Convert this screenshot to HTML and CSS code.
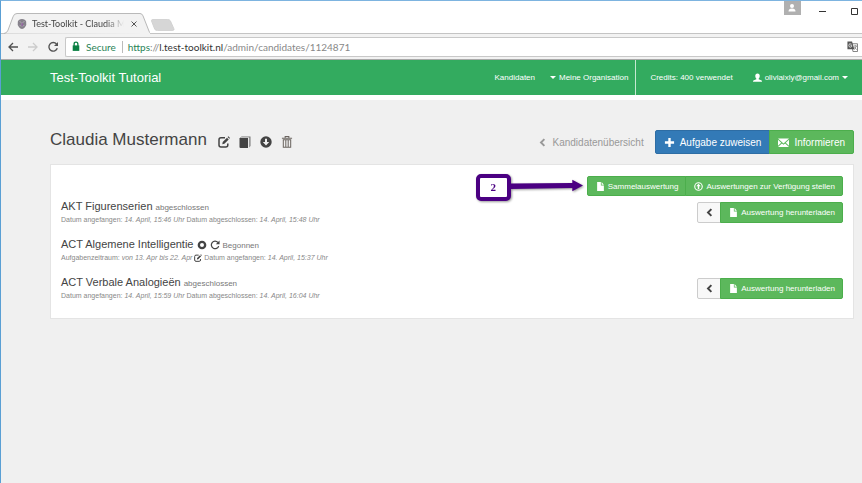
FILE: index.html
```html
<!DOCTYPE html>
<html lang="de">
<head>
    <meta charset="UTF-8">
    <meta name="viewport" content="width=device-width, initial-scale=1.0">
    <title>Test-Toolkit - Claudia Mustermann</title>
    <link rel="stylesheet" href="styles.css">
</head>
<body>
    <svg class="sprite" aria-hidden="true">
        <symbol id="i-left" viewBox="0 0 12 12"><path d="M8.500 1.500 4 6l4.500 4.500" fill="none" stroke="currentColor" stroke-width="2.600"/></symbol>
        <symbol id="i-file" viewBox="0 0 12 12"><path d="M1.500 0H6.500V4.500H10.500V12H1.500ZM7.500 0 10.500 3.500H7.500Z" fill="currentColor"/></symbol>
        <symbol id="i-edit" viewBox="0 0 12 12"><path d="M7 1.700H3Q1 1.700 1 3.700V9Q1 11 3 11H7.800Q9.800 11 9.800 9V7.500" fill="none" stroke="currentColor" stroke-width="1.500"/><path d="M4.300 8.200 4.700 6 9 1.700 10.700 3.400 6.400 7.700ZM9.600 1.100 10.400.3 12 1.900 11.300 2.700Z" fill="currentColor"/></symbol>
        <symbol id="i-up" viewBox="0 0 12 12"><circle cx="6" cy="6" r="5" fill="none" stroke="currentColor" stroke-width="1.500"/><path d="M6 2.300 9 5.600H7V9.300H5V5.600H3Z" fill="currentColor"/></symbol>
    </svg>

    <div class="browser">
        <div class="tabs">
            <div class="tab">
                <svg class="tab-shape" viewBox="0 0 146 22" preserveAspectRatio="none"><path d="M0 21.500Q3 21 4 18L9 4Q10 .5 13 .5H136Q138 .5 139 3L145 19Q146 21 147 22" fill="#f2f2f2" stroke="#b5b5b5"/></svg>
                <svg class="favicon" viewBox="0 0 12 12"><path d="M6 0Q10 0 11 3 12 7 9.500 10 8 12 6 12 4 12 2.500 10 0 7 1 3 2 0 6 0Z" fill="#85818a"/><path d="M3 3 5 4M9 3 7 4M6 4V8M3 7 5 9M9 7 7 9" stroke="#b9aebf"/><path d="M5.500 5H7V8H5.500Z" fill="#9457a5"/></svg>
                <span class="tab-title">Test-Toolkit - Claudia Mustermann</span>
                <button class="tab-close" aria-label="Tab schließen"><svg viewBox="0 0 8 8"><path d="M1.500 1.500 6.500 6.500M6.500 1.500 1.500 6.500" stroke="#555"/></svg></button>
            </div>
            <button class="new-tab" aria-label="Neuer Tab"><svg viewBox="0 0 26 13"><path d="M2 .5H18Q20 .5 21 2L25 11Q25 12.500 23 12.500H7Q5 12.500 4 11L.5 2Q.5.5 2 .5Z" fill="#d6d6d6" stroke="#d0d0d0"/></svg></button>
            <div class="window-controls">
                <button class="profile" aria-label="Profil"><svg viewBox="0 0 12 12"><circle cx="6" cy="4" r="2" fill="#fff"/><path d="M2.500 9.500Q2.500 6.500 6 6.500 9.500 6.500 9.500 9.500Z" fill="#fff"/></svg></button>
                <button aria-label="Minimieren"><svg viewBox="0 0 8 8"><path d="M0 4.500H7" stroke="#333"/></svg></button>
                <button aria-label="Maximieren"><svg viewBox="0 0 8 8"><path d="M.5 1.500H6.500V7.500H.5Z" fill="none" stroke="#333"/></svg></button>
            </div>
        </div>
        <div class="toolbar">
            <button aria-label="Zurück"><svg viewBox="0 0 12 12"><path d="M11 6H2M6 2 2 6l4 4" fill="none" stroke="#505050" stroke-width="1.300"/></svg></button>
            <button aria-label="Vorwärts"><svg viewBox="0 0 12 12"><path d="M1 6H10M6 2 10 6 6 10" fill="none" stroke="#ccc" stroke-width="1.300"/></svg></button>
            <button aria-label="Neu laden"><svg viewBox="0 0 12 12"><path d="M9.500 3A4.300 4.300 0 1 0 10.300 7.200" fill="none" stroke="#555" stroke-width="1.400"/><path d="M11 1V5H7Z" fill="#555"/></svg></button>
            <div class="address">
                <svg class="lock" viewBox="0 0 8 10"><path d="M1 4H7V9H1Z" fill="#0b8043"/><path d="M2.300 4.500V2.700Q2.300 1 4 1T5.700 2.700V4.500" fill="none" stroke="#0b8043" stroke-width="1.200"/></svg>
                <span class="secure">Secure</span>
                <span class="url"><span class="scheme">https</span><span class="dim">://</span>l.test-toolkit.nl<span class="dim">/admin/candidates/1124871</span></span>
                <svg class="translate" viewBox="0 0 12 12"><path d="M5 3H11.500V11.500H6.500Z" fill="#fff" stroke="#777"/><path d="M.5.5H5.500L8 9H.5Z" fill="#555"/><path d="M5 3.500Q2 2 2 4.700 2 7 4 6.700 5.500 6.500 5.200 5H3.800" fill="none" stroke="#fff" stroke-width=".8"/><path d="M7.500 5.500H11M9 4.500V5.500M10.300 5.500 7.800 9.500M8 6.500 10.500 9.500" stroke="#777" stroke-width=".8"/></svg>
            </div>
        </div>
    </div>

    <nav class="navbar">
        <a class="brand" href="#">Test-Toolkit Tutorial</a>
        <div class="nav-main">
            <a href="#">Kandidaten</a>
            <a href="#"><span class="caret"></span>Meine Organisation</a>
        </div>
        <div class="nav-user">
            <a href="#">Credits: 400 verwendet</a>
            <a href="#"><svg class="icon-small" viewBox="0 0 12 12"><path d="M6 .5Q9 .5 9 4 9 6 7.500 7.500V8.300L11.500 10Q12 10.500 12 11.500H0Q0 10.500.5 10L4.500 8.300V7.500Q3 6 3 4 3 .5 6 .5Z" fill="currentColor"/></svg>oliviaixly@gmail.com<span class="caret"></span></a>
        </div>
    </nav>

    <main>
        <header class="page-header">
            <h1>Claudia Mustermann</h1>
            <div class="tools">
                <button aria-label="Bearbeiten"><svg><use href="#i-edit"/></svg></button>
                <button aria-label="Bericht"><svg viewBox="0 0 12 12"><path d="M2.500.5H11.500V10L10 11.500V2H1Z" fill="#777"/><path d="M.5 2H9V12H1.500Q.5 12 .5 11Z" fill="currentColor"/><path d="M2 1.500H10V11" fill="none" stroke="#ddd" stroke-width=".7"/></svg></button>
                <button aria-label="Herunterladen"><svg viewBox="0 0 12 12"><circle cx="6" cy="6" r="5.700" fill="currentColor"/><path d="M5 2.700H7V6H9.200L6 9.500 2.800 6H5Z" fill="#f0f0f0"/></svg></button>
                <button aria-label="Löschen"><svg viewBox="0 0 12 13"><path d="M.5 2.500H11.500M4 2V.6H8V2M2 4H10V12.300H2ZM4.700 4V12M7.300 4V12" fill="none" stroke="#6b6560" stroke-width="1.100"/></svg></button>
            </div>
            <a class="back" href="#"><svg><use href="#i-left"/></svg>Kandidatenübersicht</a>
            <div class="group large">
                <button class="btn blue"><svg viewBox="0 0 12 12"><path d="M6 1V11M1 6H11" stroke="currentColor" stroke-width="2.600"/></svg>Aufgabe zuweisen</button>
                <button class="btn green"><svg viewBox="0 0 12 12"><path d="M0 1.500H12L6 7ZM0 3 3.500 6.300 0 9.500ZM12 3V9.500L8.500 6.300ZM4.300 7 6 8.500 7.700 7 12 11H0Z" fill="currentColor"/></svg>Informieren</button>
            </div>
        </header>

        <section class="card">
            <div class="card-actions">
                <div class="group">
                    <button class="btn green"><svg><use href="#i-file"/></svg>Sammelauswertung</button>
                    <button class="btn green"><svg><use href="#i-up"/></svg>Auswertungen zur Verfügung stellen</button>
                    <div class="callout">
                        <span class="callout-number">2</span>
                        <svg class="callout-arrow" viewBox="0 0 74 14"><path d="M0 4.500 63 4V.5L74 6.500 63 12.500V9L0 10Z" fill="#4b0082"/></svg>
                    </div>
                </div>
            </div>

            <article class="task">
                <div class="task-info">
                    <h2>AKT Figurenserien <small>abgeschlossen</small></h2>
                    <p>Datum angefangen: <em>14. April, 15:46 Uhr</em> Datum abgeschlossen: <em>14. April, 15:48 Uhr</em></p>
                </div>
                <div class="group">
                    <button class="btn plain" aria-label="Mehr"><svg><use href="#i-left"/></svg></button>
                    <button class="btn green"><svg><use href="#i-file"/></svg>Auswertung herunterladen</button>
                </div>
            </article>

            <article class="task">
                <div class="task-info">
                    <h2>ACT Algemene Intelligentie
                        <svg viewBox="0 0 12 12"><circle cx="6" cy="6" r="3.800" fill="none" stroke="currentColor" stroke-width="2.800"/></svg>
                        <svg viewBox="0 0 12 12"><path d="M9.500 3A4.500 4.500 0 1 0 10.400 7.300" fill="none" stroke="currentColor" stroke-width="1.500"/><path d="M11.500.5V5H7Z" fill="currentColor"/></svg>
                        <small>Begonnen</small></h2>
                    <p>Aufgabenzeitraum: <em>von 13. Apr bis 22. Apr</em> <svg><use href="#i-edit"/></svg> Datum angefangen: <em>14. April, 15:37 Uhr</em></p>
                </div>
            </article>

            <article class="task">
                <div class="task-info">
                    <h2>ACT Verbale Analogieën <small>abgeschlossen</small></h2>
                    <p>Datum angefangen: <em>14. April, 15:59 Uhr</em> Datum abgeschlossen: <em>14. April, 16:04 Uhr</em></p>
                </div>
                <div class="group">
                    <button class="btn plain" aria-label="Mehr"><svg><use href="#i-left"/></svg></button>
                    <button class="btn green"><svg><use href="#i-file"/></svg>Auswertung herunterladen</button>
                </div>
            </article>
        </section>
    </main>
</body>
</html>
```
FILE: styles.css
```css
* {
    box-sizing: border-box;
}
body {
    margin: 0;
    min-height: 100vh;
    border-top: 1px solid #7db4e0;
    border-left: 1px solid #5a9fd4;
    background-color: #f0f0f0;
    font-family: "Liberation Sans", Arial, sans-serif;
    font-size: 8px;
    color: #444;
}
h1, h2, p {
    margin: 0;
    font-weight: normal;
}
a {
    color: inherit;
    text-decoration: none;
}
button {
    padding: 0;
    border: none;
    background: none;
    font-family: inherit;
    color: inherit;
    cursor: pointer;
}
svg {
    display: block;
    flex: none;
}
.sprite {
    position: absolute;
    width: 0;
    height: 0;
}

/* Browser */
.browser {
    font-family: Lato, "Open Sans", sans-serif;
    background-color: #f2f2f2;
}
.tabs {
    display: flex;
    align-items: flex-end;
    height: 33px;
    padding-left: 3px;
    background-color: #fff;
    border-bottom: 1px solid #c4c4c4;
}
.tab {
    position: relative;
    display: flex;
    align-items: center;
    width: 146px;
    height: 21px;
    margin-bottom: -1px;
    padding: 0 12px 0 13px;
}
.tab-shape {
    position: absolute;
    top: 0;
    left: 0;
    width: 100%;
    height: 100%;
}
.favicon {
    position: relative;
    width: 10px;
    height: 12px;
    margin-right: 5px;
}
.tab-title {
    position: relative;
    flex: 1;
    overflow: hidden;
    white-space: nowrap;
    font-size: 9px;
    -webkit-mask-image: linear-gradient(to right, #000 80%, transparent);
    mask-image: linear-gradient(to right, #000 80%, transparent);
}
.tab-close {
    position: relative;
    margin: 0 0 0 6px;
}
.tab-close svg {
    width: 8px;
    height: 8px;
}
.new-tab {
    margin-bottom: 2px;
}
.new-tab svg {
    width: 26px;
    height: 12px;
}
.window-controls {
    display: flex;
    align-self: flex-start;
    align-items: center;
    gap: 18px;
    margin-left: auto;
    margin-right: 3px;
}
.window-controls svg {
    width: 8px;
    height: 8px;
    margin-top: 5px;
}
.window-controls button + button + button {
    margin-left: 6px;
}
.window-controls .profile {
    width: 17px;
    height: 14px;
    padding-left: 2px;
    background-color: #b0b0b0;
}
.window-controls .profile svg {
    width: 12px;
    height: 12px;
    margin: 0;
}
.toolbar {
    display: flex;
    align-items: center;
    gap: 8px;
    height: 26px;
    padding-left: 6px;
    border-bottom: 1px solid #aaa;
}
.toolbar button svg {
    width: 12px;
    height: 12px;
}
.address {
    display: flex;
    align-items: center;
    flex: 1;
    height: 20px;
    margin-left: -2px;
    padding: 0 4px 0 5px;
    border: 1px solid #c8c8c8;
    border-right: none;
    border-radius: 2px 0 0 2px;
    background-color: #fff;
    font-size: 10px;
}
.lock {
    width: 10px;
    height: 11px;
    margin-right: 5px;
}
.secure {
    padding-right: 6px;
    border-right: 1px solid #bbb;
    line-height: 12px;
    color: #2a8457;
}
.url {
    flex: 1;
    padding-left: 5px;
    color: #333;
}
.scheme {
    color: #2a8457;
}
.dim {
    color: #888;
}
.translate {
    width: 11px;
    height: 11px;
}

/* Navbar */
.navbar {
    display: flex;
    align-items: center;
    height: 40px;
    padding-left: 49px;
    border-bottom: 5px solid #fff;
    background-color: #33ab5f;
    color: #fff;
}
.brand {
    margin-right: auto;
    font-size: 13px;
}
.nav-main, .nav-user {
    display: flex;
    align-items: center;
    height: 35px;
}
.nav-main {
    gap: 15px;
    padding-right: 7px;
    border-right: 1px solid #c5e8d1;
}
.nav-user {
    gap: 20px;
    padding: 0 14px;
}
.navbar a {
    display: flex;
    align-items: center;
    gap: 3px;
}
.icon-small {
    width: 9px;
    height: 9px;
}
.caret {
    border: 3px solid transparent;
    border-top-color: #fff;
    border-bottom: 0;
}

/* Page */
main {
    padding: 30px 8px 0 49px;
}
.page-header {
    display: flex;
    align-items: center;
    height: 24px;
    margin-bottom: 10px;
}
h1 {
    margin-bottom: 4px;
    font-size: 17px;
    line-height: 20px;
}
.tools {
    display: flex;
    gap: 9px;
    margin-left: 11px;
}
.tools svg {
    width: 12px;
    height: 12px;
}
.back {
    display: flex;
    align-items: center;
    gap: 6px;
    margin: 0 11px 0 auto;
    font-size: 10px;
    color: #999;
}
.back svg {
    width: 9px;
    height: 9px;
}
.group {
    position: relative;
    display: flex;
}
.btn {
    display: flex;
    align-items: center;
    justify-content: center;
    gap: 3px;
    height: 20px;
    padding: 0 7px 0 8px;
    border: 1px solid #4cae4c;
    font-size: 8px;
    white-space: nowrap;
}
.btn:first-child {
    border-radius: 2px 0 0 2px;
}
.btn + .btn {
    margin-left: -1px;
    border-radius: 0 2px 2px 0;
}
.btn svg {
    width: 9px;
    height: 9px;
}
.btn.green {
    background-color: #5cb85c;
    color: #fff;
}
.btn.blue {
    background-color: #337ab7;
    border-color: #2e6da4;
    color: #fff;
}
.btn.plain {
    width: 24px;
    padding: 0;
    background-color: #f8f8f8;
    border-color: #ccc;
}
.task .btn {
    height: 21px;
}
.large .btn {
    height: 24px;
    gap: 5px;
    padding: 0 8px;
    font-size: 10px;
}
.large svg {
    width: 11px;
    height: 11px;
}
.card {
    padding: 11px 10px 8px;
    border: 1px solid #e4e4e4;
    background-color: #fff;
}
.card-actions {
    display: flex;
    justify-content: flex-end;
}

/* Callout over the card */
.callout {
    position: absolute;
    right: 100%;
    top: -2px;
    display: flex;
    align-items: center;
    padding-right: 4px;
    filter: drop-shadow(1px 1px 1px #999);
}
.callout-number {
    width: 35px;
    height: 27px;
    border: 4px solid #4b0082;
    border-radius: 5px;
    background-color: #fff;
    font: bold 11px/18px "Liberation Serif", serif;
    text-align: center;
    color: #4b0082;
}
.callout-arrow {
    width: 72px;
    height: 14px;
    margin-top: -3px;
}

/* Tasks */
.task {
    display: flex;
    align-items: center;
    justify-content: space-between;
    height: 32px;
    margin-bottom: 6px;
}
h2 {
    display: flex;
    align-items: baseline;
    gap: 3px;
    font-size: 11px;
    line-height: 13px;
}
h2 svg {
    align-self: center;
    width: 10px;
    height: 10px;
}
small {
    font-size: 8px;
    color: #777;
}
.task p {
    font-size: 7px;
    line-height: 11px;
    color: #888;
}
.task p svg {
    display: inline-block;
    width: 8px;
    height: 8px;
    vertical-align: middle;
    color: #444;
}
```
